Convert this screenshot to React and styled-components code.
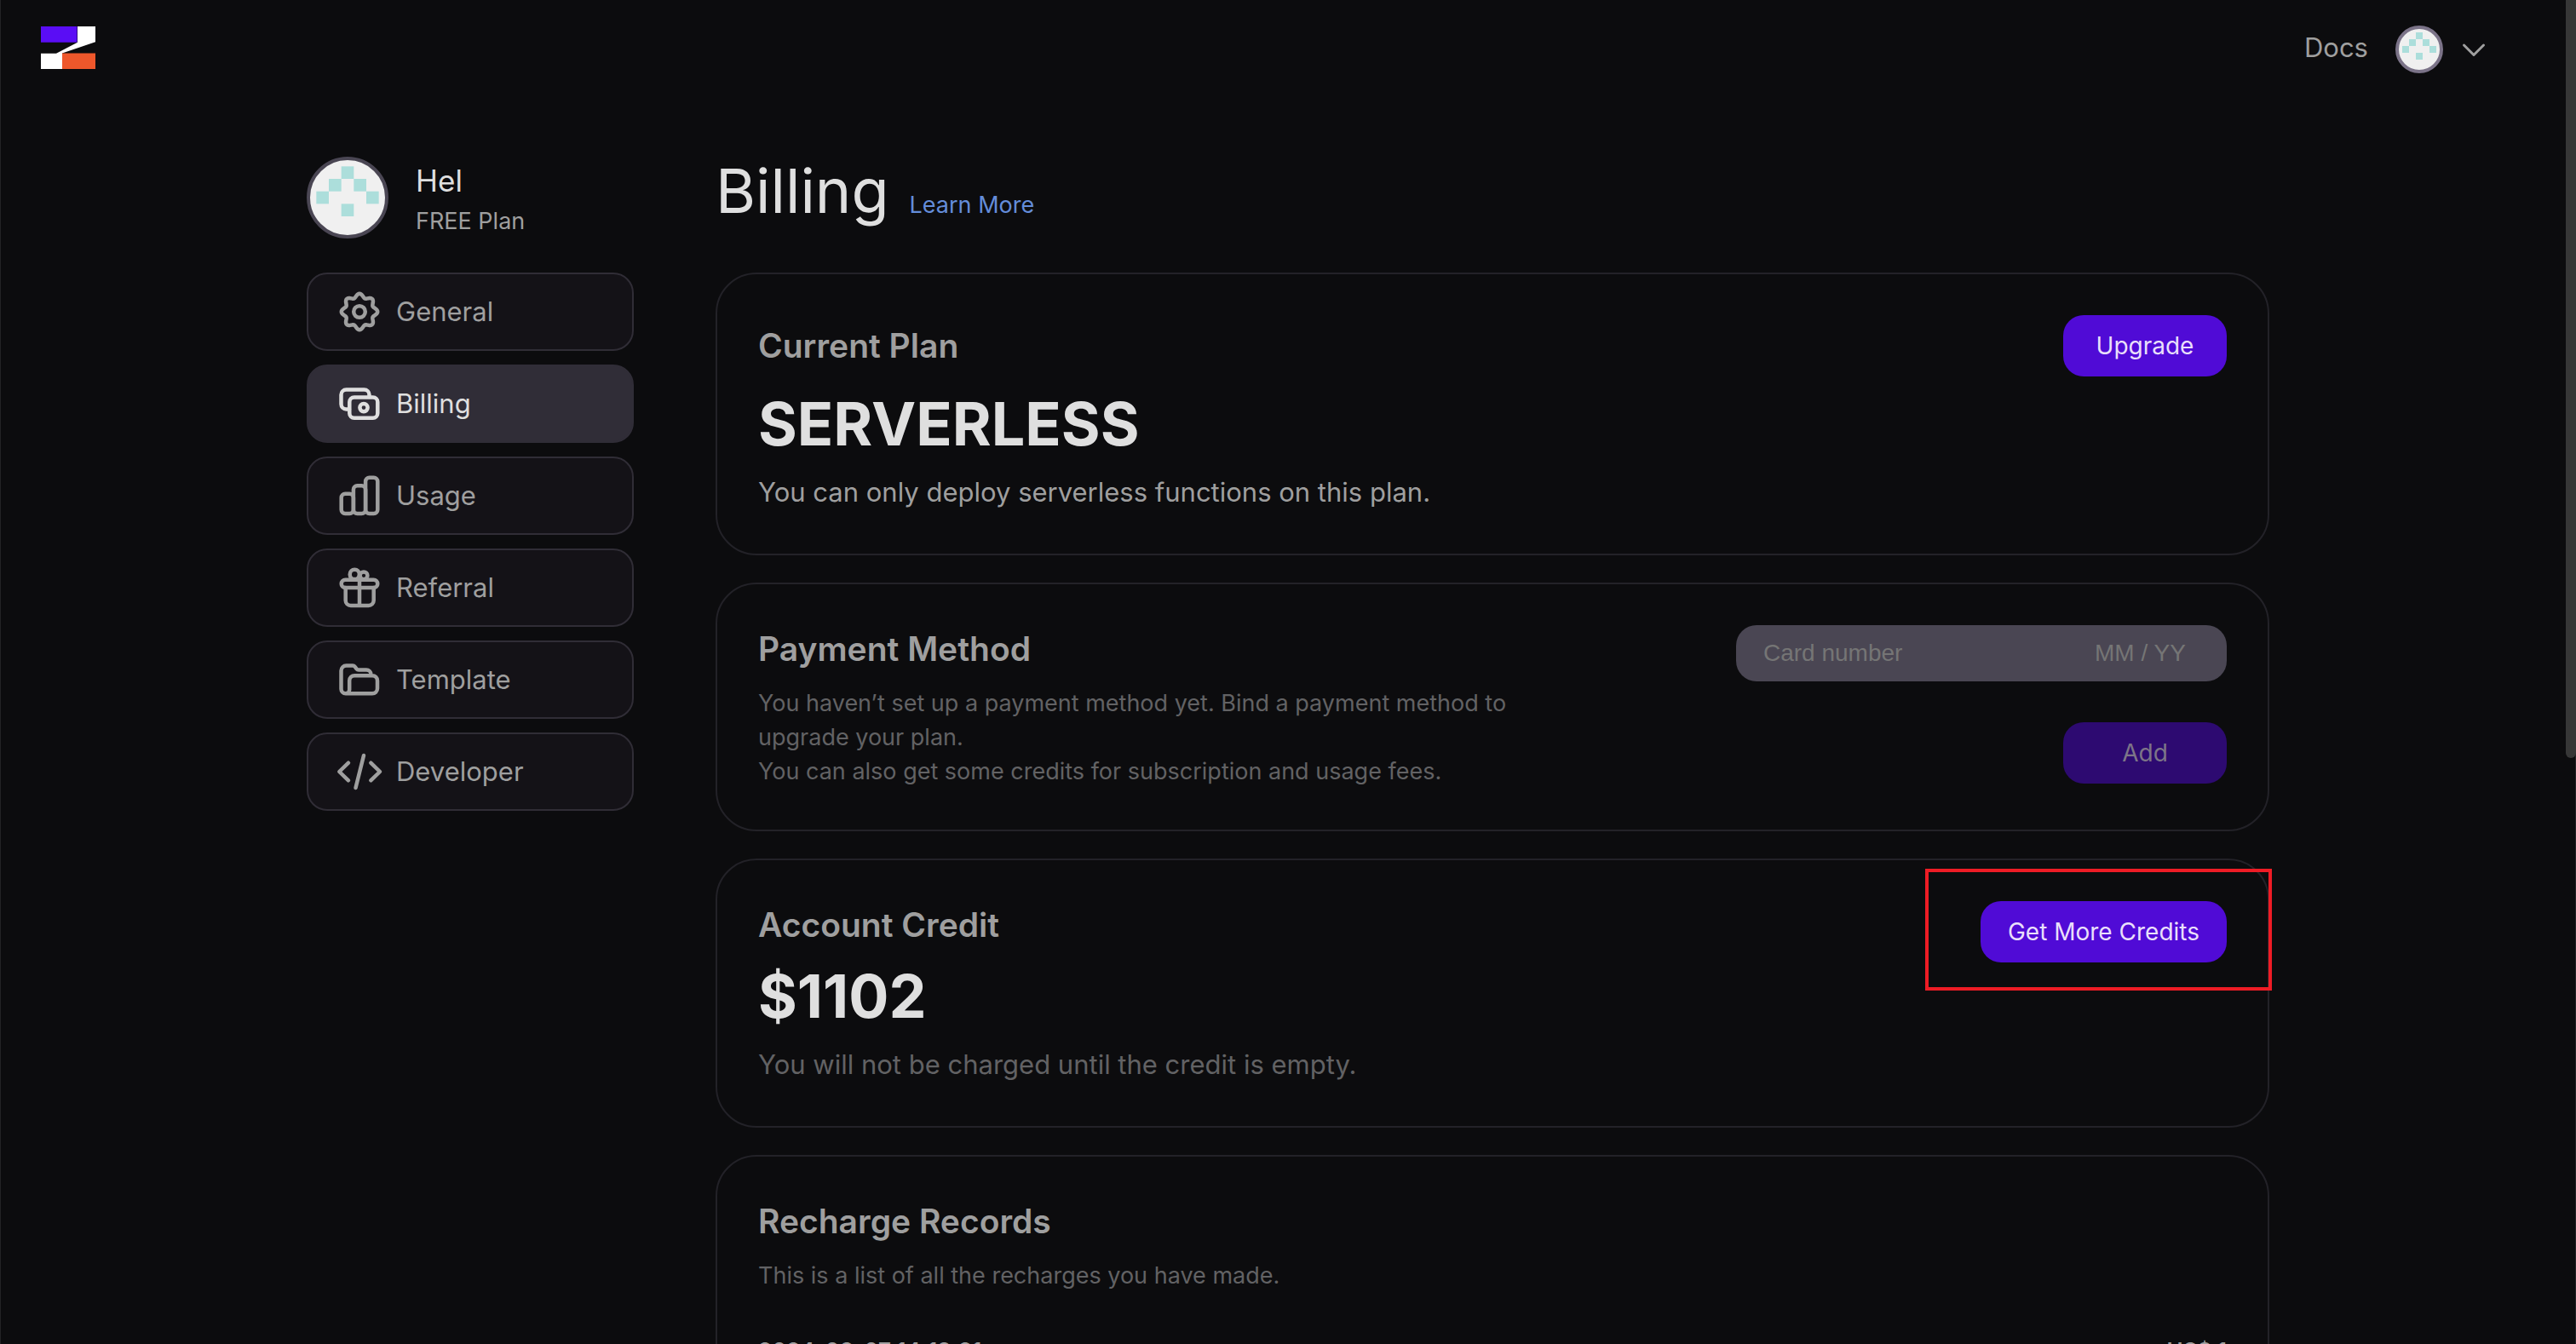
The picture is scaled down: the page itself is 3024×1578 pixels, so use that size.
import React from 'react';
import styled, { createGlobalStyle } from 'styled-components';

const color = {
  page: '#0c0c0e',
  strong: '#dfdfdf',
  medium: '#9f9f9f',
  muted: '#626264',
  link: '#648dda',
  cardLine: '#232228',
  navLine: '#302d36',
  navFill: '#141217',
  navActive: '#302d37',
  field: '#4a4653',
  primary: '#500bd6',
  primaryOff: '#2d0a71',
};

const GlobalStyle = createGlobalStyle`
  *, *::before, *::after { box-sizing: border-box; }
  html, body { margin: 0; background: ${color.page}; }
  body {
    font-family: Inter, "Liberation Sans", sans-serif;
    font-size: 27px;
    line-height: 40px;
    color: ${color.medium};
  }
  h1, h2, p { margin: 0; }
  button, input { font: inherit; }
`;

const Page = styled.div`
  height: 100vh;
  overflow-y: auto;
  scrollbar-width: none;
  border: solid #232325;
  border-width: 0 1px;
`;

const ScrollThumb = styled.div`
  position: fixed;
  top: 0;
  right: 0;
  width: 12px;
  height: 890px;
  border-radius: 0 0 6px 6px;
  background: #373737;
`;

const Header = styled.header`
  display: flex;
  align-items: center;
  justify-content: space-between;
  height: 116px;
  padding: 0 103px 0 47px;
`;

const LogoLink = styled.a`
  padding-bottom: 4px;

  svg { display: block; }
`;

const HeaderActions = styled.div`
  display: flex;
  align-items: center;
  gap: 32px;
`;

const DocsLink = styled.a`
  padding-bottom: 4px;
  color: ${color.medium};
  font-size: 31px;
  text-decoration: none;
`;

const AccountButton = styled.button`
  display: flex;
  align-items: center;
  gap: 20px;
  padding: 0;
  border: 0;
  background: none;
  color: ${color.medium};
`;

const AvatarSvg = styled.svg`
  display: block;
  flex: none;
  width: ${(p) => p.$size}px;
  height: ${(p) => p.$size}px;
  border: 4px solid ${(p) => p.$ring};
  border-radius: 50%;
  background: #f0f0f0;
`;

const Main = styled.main`
  display: grid;
  grid-template-columns: 384px minmax(0, 1fr);
  align-items: start;
  gap: 96px;
  max-width: 2304px;
  margin: 0 auto;
  padding: 68px 0 96px;
`;

const Sidebar = styled.aside`
  display: flex;
  flex-direction: column;
  gap: 40px;
`;

const Profile = styled.div`
  display: flex;
  align-items: center;
  gap: 32px;
`;

const ProfileName = styled.p`
  color: ${color.strong};
  font-size: 35px;
  line-height: 56px;
`;

const Nav = styled.nav`
  display: flex;
  flex-direction: column;
  gap: 16px;
`;

const NavItem = styled.a`
  display: flex;
  align-items: center;
  gap: 19px;
  height: 92px;
  padding: 0 36px;
  border: 2px solid ${(p) => (p.$active ? color.navActive : color.navLine)};
  border-radius: 24px;
  background: ${(p) => (p.$active ? color.navActive : color.navFill)};
  color: ${(p) => (p.$active ? color.strong : color.medium)};
  font-size: 31px;
  text-decoration: none;
`;

const NavSvg = styled.svg`
  flex: none;
  width: 48px;
  height: 48px;
  overflow: visible;
  fill: none;
  stroke: currentColor;
  stroke-width: 4.5;
  stroke-linecap: round;
  stroke-linejoin: round;
`;

const Content = styled.div`
  display: flex;
  flex-direction: column;
  gap: 32px;
`;

const TitleRow = styled.div`
  display: flex;
  align-items: baseline;
  gap: 24px;
  height: 80px;
  margin-bottom: 24px;
`;

const Title = styled.h1`
  color: ${color.strong};
  font-size: 72px;
  font-weight: 400;
  line-height: 80px;
`;

const LearnLink = styled.a`
  color: ${color.link};
  text-decoration: none;
`;

const Card = styled.section`
  position: relative;
  display: flex;
  align-items: flex-start;
  justify-content: space-between;
  gap: 32px;
  padding: 48px;
  border: 2px solid ${color.cardLine};
  border-radius: 48px;
`;

const CardText = styled.div`
  display: flex;
  flex: 1;
  flex-direction: column;
  gap: 16px;
  min-width: 0;
`;

const CardTitle = styled.h2`
  font-size: 39px;
  font-weight: 600;
  line-height: ${(p) => (p.$tall ? 72 : 56)}px;
`;

const Figure = styled.p`
  color: ${color.strong};
  font-size: 70px;
  font-weight: 700;
  line-height: 80px;
`;

const Lead = styled.p`
  color: ${(p) => (p.$muted ? color.muted : color.medium)};
  font-size: 31px;
  line-height: 48px;
`;

const Note = styled.p`
  max-width: 920px;
  color: ${color.muted};
`;

const Button = styled.button`
  min-width: 192px;
  height: 72px;
  padding: 0 32px;
  border: 0;
  border-radius: 24px;
  background: ${color.primary};
  color: #e9dffb;
  font-size: 28px;

  &:disabled {
    background: ${color.primaryOff};
    color: #7d7588;
  }
`;

const PaymentForm = styled.form`
  display: flex;
  flex-direction: column;
  align-items: flex-end;
  gap: 48px;
  width: 576px;
`;

const CardField = styled.div`
  display: flex;
  justify-content: space-between;
  width: 100%;
  height: 66px;
  padding: 0 32px;
  border-radius: 24px;
  background: ${color.field};
  font-family: "Liberation Sans", Arial, sans-serif;
  font-size: 28px;
`;

const FieldInput = styled.input`
  width: ${(p) => p.$width}px;
  padding: 0;
  border: 0;
  outline: 0;
  background: none;
  color: ${color.strong};

  &::placeholder {
    color: #757575;
    opacity: 1;
  }
`;

const Highlight = styled.div`
  position: absolute;
  top: 10px;
  right: -5px;
  width: 407px;
  height: 143px;
  border: 4px solid #ee1c25;
  pointer-events: none;
`;

const Records = styled.table`
  width: 100%;
  margin-top: 32px;
  border-collapse: collapse;
  font-size: 26px;
  font-weight: 600;

  td { padding: 0; }
  td:last-child { text-align: right; }
`;

const cells = [[2, 0], [1, 1], [3, 1], [0, 2], [4, 2], [2, 3]];

function Avatar({ size, ring }) {
  return (
    <AvatarSvg $size={size} $ring={ring} viewBox="0 0 12 12" aria-hidden="true">
      {cells.map(([x, y]) => (
        <rect key={`${x}-${y}`} x={1 + x * 2} y={1 + y * 2} width="2" height="2" fill="#acdedb" />
      ))}
    </AvatarSvg>
  );
}

function Logo() {
  return (
    <svg width="64" height="50" viewBox="0 0 64 50" aria-hidden="true">
      <path d="M0 0H42.5V18.7H0z" fill="#5a0df5" />
      <path d="M43 0H64V18.2L25 31.5V50H0V31.8H18L43 18.7z" fill="#fff" />
      <path d="M25 31.5H64V50H25z" fill="#ee572b" />
    </svg>
  );
}

const gearPath = Array.from({ length: 160 }, (_, i) => {
  const angle = (i / 160) * Math.PI * 2;
  const radius = 19 + 2.2 * Math.cos(angle * 8);
  const x = (24 + radius * Math.cos(angle)).toFixed(2);
  const y = (24 + radius * Math.sin(angle)).toFixed(2);
  return `${i ? 'L' : 'M'}${x} ${y}`;
}).join('') + 'Z';

const navItems = [
  { label: 'General', icon: <><path d={gearPath} /><circle cx="24" cy="24" r="6.8" /></> },
  {
    label: 'Billing',
    active: true,
    icon: (
      <>
        <path d="M12 30.5H8.5a6 6 0 0 1-6-6V13.5a6 6 0 0 1 6-6h21a6 6 0 0 1 6 6V16" />
        <rect x="12.3" y="16.5" width="33" height="24.2" rx="5.5" />
        <circle cx="29" cy="28.6" r="4.6" />
      </>
    ),
  },
  {
    label: 'Usage',
    icon: (
      <>
        <rect x="2.7" y="21.7" width="14.2" height="23.4" rx="4.5" />
        <rect x="16.9" y="12.2" width="14.2" height="32.9" rx="4.5" />
        <rect x="31.1" y="2.8" width="14.2" height="42.3" rx="4.5" />
      </>
    ),
  },
  {
    label: 'Referral',
    icon: (
      <>
        <circle cx="18.3" cy="8.4" r="5.6" />
        <circle cx="29" cy="9.8" r="4.4" />
        <rect x="2.7" y="14.7" width="42.6" height="9.4" rx="4.7" />
        <path d="M7.7 24.1V39a6 6 0 0 0 6 6h21a6 6 0 0 0 6-6V24.1M24 9V45" />
      </>
    ),
  },
  {
    label: 'Template',
    icon: (
      <path d="M37.5 19v-1a5.5 5.5 0 0 0-5.5-5.5H23a3 3 0 0 1-2.4-1.2L18.5 8.7a3 3 0 0 0-2.4-1.2H8.5a6 6 0 0 0-6 6V35a5.3 5.3 0 0 0 5.3 5.3H39a6 6 0 0 0 6-6V25.2a6 6 0 0 0-6-6H18.2a6 6 0 0 0-6 6V36a4.4 4.4 0 0 1-4.4 4.3" />
    ),
  },
  {
    label: 'Developer',
    icon: <path d="M11 13.7 0.3 24 11 34.3M37.3 13.7 48 24 37.3 34.3M29 5 19.5 43" />,
  },
];

export default function App() {
  return (
    <Page>
      <GlobalStyle />
      <Header>
        <LogoLink href="#home" aria-label="Home"><Logo /></LogoLink>
        <HeaderActions>
          <DocsLink href="#docs">Docs</DocsLink>
          <AccountButton type="button" aria-label="Account menu">
            <Avatar size={56} ring="#7b7388" />
            <svg width="32" height="32" viewBox="0 0 32 32" fill="none" stroke="currentColor" strokeWidth="3" strokeLinecap="round" strokeLinejoin="round" aria-hidden="true">
              <path d="M4.5 11 16 22.5 27.5 11" />
            </svg>
          </AccountButton>
        </HeaderActions>
      </Header>

      <Main>
        <Sidebar>
          <Profile>
            <Avatar size={96} ring="#4a4653" />
            <div>
              <ProfileName>Hel</ProfileName>
              <p>FREE Plan</p>
            </div>
          </Profile>
          <Nav aria-label="Settings">
            {navItems.map(({ label, icon, active }) => (
              <NavItem key={label} href={`#${label.toLowerCase()}`} $active={active} aria-current={active ? 'page' : undefined}>
                <NavSvg viewBox="0 0 48 48" aria-hidden="true">{icon}</NavSvg>
                {label}
              </NavItem>
            ))}
          </Nav>
        </Sidebar>

        <Content>
          <TitleRow>
            <Title>Billing</Title>
            <LearnLink href="#learn-more">Learn More</LearnLink>
          </TitleRow>

          <Card>
            <CardText>
              <CardTitle $tall>Current Plan</CardTitle>
              <Figure>SERVERLESS</Figure>
              <Lead>You can only deploy serverless functions on this plan.</Lead>
            </CardText>
            <Button type="button">Upgrade</Button>
          </Card>

          <Card>
            <CardText>
              <CardTitle>Payment Method</CardTitle>
              <Note>
                You haven’t set up a payment method yet. Bind a payment method to upgrade your plan.
                <br />
                You can also get some credits for subscription and usage fees.
              </Note>
            </CardText>
            <PaymentForm>
              <CardField>
                <FieldInput $width={320} aria-label="Card number" placeholder="Card number" />
                <FieldInput $width={123} aria-label="Expiry date" placeholder="MM / YY" />
              </CardField>
              <Button type="submit" disabled>Add</Button>
            </PaymentForm>
          </Card>

          <Card>
            <CardText>
              <CardTitle>Account Credit</CardTitle>
              <Figure>$1102</Figure>
              <Lead $muted>You will not be charged until the credit is empty.</Lead>
            </CardText>
            <Button type="button">Get More Credits</Button>
            <Highlight />
          </Card>

          <Card>
            <CardText>
              <CardTitle>Recharge Records</CardTitle>
              <Note>This is a list of all the recharges you have made.</Note>
              <Records>
                <tbody>
                  <tr>
                    <td>2024-03-07 14:18:21</td>
                    <td>US$ 1</td>
                  </tr>
                </tbody>
              </Records>
            </CardText>
          </Card>
        </Content>
      </Main>
      <ScrollThumb />
    </Page>
  );
}
